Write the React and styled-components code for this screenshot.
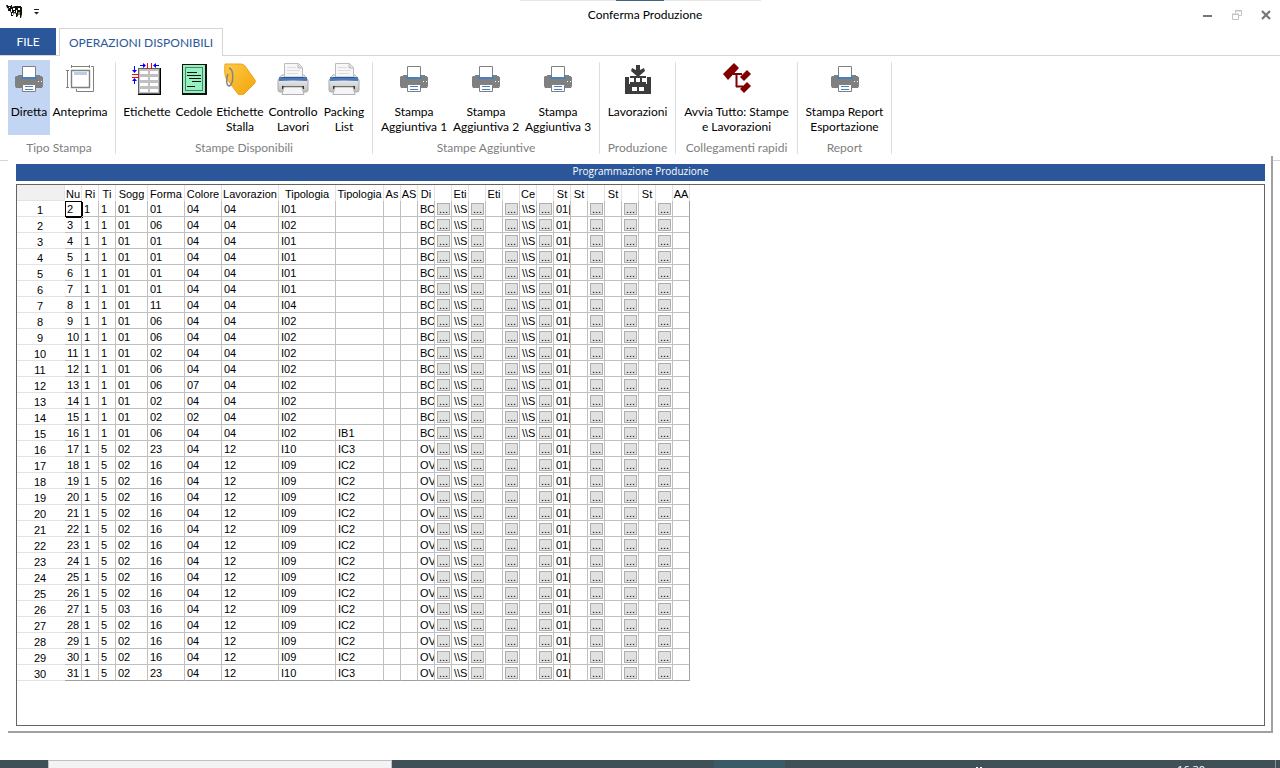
import { useState } from 'react';
import styled, { createGlobalStyle } from 'styled-components';

const GlobalStyle = createGlobalStyle`
  * {
    box-sizing: border-box;
  }

  body {
    margin: 0;
    background: #ffffff;
    font-family: Lato, 'Open Sans', sans-serif;
    font-size: 12px;
    color: #000000;
  }

  button, input {
    font-family: inherit;
    font-size: inherit;
    color: inherit;
    margin: 0;
    padding: 0;
    border: 0;
    background: none;
  }

  svg {
    display: block;
  }
`;

const Window = styled.div`
  min-height: 100vh;
  display: flex;
  flex-direction: column;
`;

const TopEdge = styled.div`
  height: 1px;
  display: flex;
  justify-content: center;
`;

const EdgePart = styled.span`
  width: ${props => props.$width}px;
  background: ${props => props.$color || '#e6e6e6'};
`;

const TitleBar = styled.header`
  height: 27px;
  display: flex;
  align-items: center;
`;

const QuickAccess = styled.div`
  width: 95px;
  padding: 0 0 6px 6px;
  display: flex;
  align-items: center;
  gap: 10px;
`;

const Title = styled.h1`
  flex: 1;
  margin: 0;
  font-size: 12px;
  line-height: 16px;
  font-weight: normal;
  text-align: center;
`;

const WindowButtons = styled.div`
  width: 85px;
  padding: 0 4px 0 2px;
  display: flex;
  justify-content: space-between;
`;

const WindowButton = styled.button`
  width: 20px;
  height: 20px;
  display: flex;
  align-items: center;
  justify-content: center;
`;

const Tabs = styled.nav`
  height: 28px;
  display: flex;
  border-bottom: 1px solid #d5d5d5;
`;

const FileTab = styled.button`
  width: 56px;
  height: 27px;
  background: #2b579a;
  color: #ffffff;
`;

const Tab = styled.button`
  width: 164px;
  height: 28px;
  margin-left: 3px;
  border: 1px solid #d5d5d5;
  border-bottom: 0;
  background: #ffffff;
  color: #2b579a;
`;

const Ribbon = styled.div`
  display: flex;
  height: 100px;
  padding: 4px 0 0 3px;
`;

const Group = styled.section`
  display: flex;
  flex-direction: column;
  padding: 0 5px;
`;

const GroupButtons = styled.div`
  display: flex;
`;

const GroupName = styled.div`
  margin-top: 5px;
  line-height: 16px;
  text-align: center;
  color: #808080;
  white-space: nowrap;
`;

const Separator = styled.div`
  width: 1px;
  height: 92px;
  margin-top: 2px;
  background: #dedede;
`;

const RibbonButton = styled.button`
  width: ${props => props.$width}px;
  height: 75px;
  padding-top: 3px;
  display: flex;
  flex-direction: column;
  align-items: center;
  gap: 9px;
  line-height: 15px;
  background: ${props => (props.$active ? '#c2d5f2' : 'transparent')};

  span {
    white-space: pre;
  }
`;

const Main = styled.main`
  flex: 1;
  display: flex;
  margin-bottom: 27px;
`;

const Edge = styled.div`
  width: ${props => props.$width}px;
  margin-top: 4px;
  border-top: 1px solid #d5d5d5;
`;

const Panel = styled.div`
  flex: 1;
  min-width: 0;
  display: flex;
  flex-direction: column;
  gap: 3px;
  padding: 8px 6px 5px 8px;
  border-right: 2px solid #a0a0a0;
  border-bottom: 2px solid #a0a0a0;
`;

const Caption = styled.h2`
  margin: 0;
  height: 17px;
  background: #2b579a;
  color: #ffffff;
  font-family: 'Open Sans', sans-serif;
  font-size: 10px;
  line-height: 14px;
  font-weight: normal;
  text-align: center;
`;

const GridBox = styled.div`
  flex: 1;
  border: 1px solid #646464;
`;

const Table = styled.table`
  width: 673px;
  table-layout: fixed;
  border-collapse: separate;
  border-spacing: 0;
  font-family: 'Liberation Sans', Arial, sans-serif;
  font-size: 11px;
  line-height: 13px;
  white-space: nowrap;
`;

const HeadCell = styled.th`
  height: 16px;
  padding: 3px 0 0;
  border-right: 1px solid #e3e3e3;
  font-weight: normal;
  text-align: center;
  overflow: hidden;
`;

const CornerCell = styled.td`
  padding: 0;
  background: #f0f0f0;
  border-right: 1px solid #e3e3e3;
  border-bottom: 1px solid #e3e3e3;
`;

const RowHead = styled.th`
  height: 16px;
  padding: 3px 2px 0 0;
  border-bottom: 1px solid #e3e3e3;
  font-weight: normal;
  line-height: 12px;
  text-align: center;
`;

const Cell = styled.td`
  height: 16px;
  padding: 2px 0 0 2px;
  border-right: 1px solid #c0c0c0;
  border-bottom: 1px solid #c0c0c0;
  overflow: hidden;
  vertical-align: top;
  box-shadow: ${props => (props.$selected ? 'inset 1px 1px #000000, 1px 1px #000000' : 'none')};
  border-color: ${props => (props.$selected ? '#000000' : '#c0c0c0')};

  tr:last-child > & {
    border-bottom-color: #a0a0a0;
  }

  &:last-child {
    border-right-color: #a0a0a0;
  }
`;

const DotsButton = styled.button`
  display: block;
  width: 13px;
  height: 12px;
  border: 1px solid #adadad;
  background: #e1e1e1;
  line-height: 8px;
  text-align: center;
`;

const Taskbar = styled.footer`
  height: 8px;
  display: flex;
  overflow: hidden;
  background: #405057;
  color: #ffffff;
`;

const SearchBox = styled.input`
  width: 344px;
  margin-left: 48px;
  border: 1px solid #c0c0c0;
  border-bottom: 0;
  border-radius: 0;
  appearance: none;
  background: #f2f3f4;
`;

const TaskButton = styled.button`
  width: 71px;
  margin-left: 322px;
  background: #3b5a67;
`;

const Tray = styled.div`
  flex: 1;
  display: flex;
  justify-content: flex-end;
  border-right: 1px solid #8a9498;
  margin-right: 4px;
  padding-right: 70px;
  gap: 194px;
`;

const TrayDots = styled.svg`
  margin-top: 7px;
`;

const Clock = styled.time`
  padding-top: 3px;
  font-family: 'Open Sans', sans-serif;
  font-size: 11px;
  line-height: 13px;
`;

const PrinterIcon = () => (
  <svg width="32" height="32" viewBox="0 0 32 32">
    <path d="M5 12h22v1h2v1h1v9l-1 2H3l-1-2v-9l1-1h2z" fill="#808080" />
    <path d="M9.5 3.5h13v11h-13z" fill="#fff" stroke="#808080" />
    <path d="M8 14h16v2H8z" fill="#4a80bd" />
    <path d="M9 12h1v2H9zM22 12h1v2h-1z" fill="#4a80bd" />
    <path d="M9.5 21.5h13v7h-13z" fill="#fff" stroke="#808080" />
    <path d="M12 23h8v1h-8zM12 26h8v1h-8z" fill="#4a80bd" />
    <path d="M25 18h1v1h-1zM28 18h1v1h-1z" fill="#fff" />
  </svg>
);

const PreviewIcon = () => (
  <svg width="32" height="32" viewBox="0 0 32 32" fill="none" stroke="#808080">
    <path d="M7.5 2v3M25.5 2v3M7.5 3.5h18M2 7.5h3M2 24.5h3M3.5 7.5v17" />
    <path d="M27 3.5h2.5v25h-17V26" />
    <path d="M7.5 7.5h18v17h-18z" strokeWidth="1.4" />
    <path d="M10 9h13v3H10z" fill="#b9cdea" stroke="none" />
  </svg>
);

const LabelsIcon = () => (
  <svg width="32" height="32" viewBox="0 0 32 32">
    <path d="M7 5h23v27H7z" fill="#000" />
    <path d="M7 5h22v26H7z" fill="#606060" />
    <path d="M8 6h20v24H8z" fill="#c0c0c0" />
    {[8, 14, 20, 26].map(y => (
      <path key={y} d={`M9 ${y}h8v3H9zM19 ${y}h8v3h-8z`} fill="#fff" />
    ))}
    <path d="M16 0h1v6h-1zM20 0h1v6h-1zM1 11h7v1H1zM1 14h7v1H1z" fill="#f00" />
    <path d="M9 2h3V0l3 2.5L12 5V3H9zM28 2h-3V0l-3 2.5L25 5V3h3zM3 3h1v4h2l-2.5 3L1 7h2zM3 21h1v-3h2l-2.5-3L1 18h2z" fill="#00f" />
  </svg>
);

const CouponIcon = () => (
  <svg width="32" height="32" viewBox="0 0 32 32">
    <path d="M4 1h25v31H4z" fill="#111" />
    <path d="M5 2h22v28H5z" fill="#93f2bf" />
    <path d="M7.5 4.5h17v23h-17z" fill="none" stroke="#111" strokeDasharray="1 1" />
    <path d="M9 9.5h10M9 12.5h14M11 15.5h12M14 18.5h9M9 23.5h8" stroke="#111" />
  </svg>
);

const TagIcon = () => (
  <svg width="32" height="32" viewBox="0 0 32 32">
    <defs>
      <linearGradient id="tag" x1="0" y1="0" x2="1" y2="1">
        <stop offset="0" stopColor="#fccb45" />
        <stop offset="1" stopColor="#f5a30a" />
      </linearGradient>
    </defs>
    <path d="M1 1h16q2 0 4 2l10 14q1 2-1 4L20 31q-3 2-6 0L2 15Q0 11 1 1z" fill="url(#tag)" stroke="#eba51c" />
    <path d="M5 5c5 1 5 16 0 18-3-1-3-8-1-12" fill="none" stroke="#858585" strokeWidth="1.5" />
  </svg>
);

const LaserIcon = () => (
  <svg width="32" height="32" viewBox="0 0 32 32">
    <defs>
      <linearGradient id="laser" x1="0" y1="0" x2="0" y2="1">
        <stop offset="0" stopColor="#fafafa" />
        <stop offset="1" stopColor="#bdbdbd" />
      </linearGradient>
    </defs>
    <path d="M5 12h22l4 5v10q0 2-2 2H3q-2 0-2-2V17z" fill="url(#laser)" stroke="#aaa" />
    <path d="M7.5 14V.5h14l4 4V14z" fill="#f7f7f7" stroke="#bcbcbc" />
    <path d="M21 1v4h4" fill="#ddd" stroke="#bbb" />
    <path d="M10 4.500h9M10 7.500h13M10 10.500h11" stroke="#dcdcdc" />
    <path d="M2 14h28v4q-14-1-28 0z" fill="#4b78b8" />
    <path d="M5 14h22v1H5z" fill="#29549a" />
    <path d="M5 23h22v3H5z" fill="#333" />
    <path d="M7 24h18l2 7.5H5z" fill="#f5f5f5" stroke="#b0b0b0" />
  </svg>
);

const FactoryIcon = () => (
  <svg width="32" height="32" viewBox="0 0 32 32">
    <path d="M3 14h4v7h18v-7h4v17H3z" fill="#3c3c3c" />
    <path d="M8 13h16v9H8z" fill="#3c3c3c" />
    <path d="M8 15h4v4H8zM14 15h4v4h-4zM20 15h4v4h-4zM10 24h5v4h-5zM17 24h5v4h-5z" fill="#fff" />
    <path d="M7 12h18v1H7z" fill="#fff" />
    <path d="M14 2h4v5l4-2 1 3-7 6-7-6 1-3 4 2z" fill="#3c3c3c" />
  </svg>
);

const LinksIcon = () => (
  <svg width="32" height="32" viewBox="0 0 32 32">
    <path d="M12 11h9M15.5 11v13M15 23.500h7" fill="none" stroke="#800000" strokeWidth="2" />
    <g fill="#800000">
      <path d="M2 11L13 0l5 5L7 17z" />
      <path d="M19 14l7-7 4 4-7 7z" />
      <path d="M19 26l7-7 4 4-7 7z" />
    </g>
  </svg>
);

const CowIcon = () => (
  <svg width="17" height="15" viewBox="0 0 17 15">
    <path d="M0 1h2v1h3V1h1v2l3-1h6v1h1v7l-1 4h-1v-4h-1l-2 3h-1V9l-1 1-1-2-1 4H5V9L4 7H2V5h1L1 4z" fill="#111" />
    <path d="M7 4h2v2H7zM5 5h1v3H5zM10 6h1v3h-1zM12 4h2v2h-2zM8 7h1v1H8zM3 3h1v1H3zM6 9h1v2H6z" fill="#fff" />
    <path d="M12 8h2v3h-2z" fill="#8a8a4a" />
  </svg>
);

const groups = [
  {
    name: 'Tipo Stampa',
    items: [
      { label: 'Diretta', width: 42, icon: PrinterIcon },
      { label: 'Anteprima', width: 60, icon: PreviewIcon },
    ],
  },
  {
    name: 'Stampe Disponibili',
    items: [
      { label: 'Etichette', width: 52, icon: LabelsIcon },
      { label: 'Cedole', width: 42, icon: CouponIcon },
      { label: 'Etichette\nStalla', width: 50, icon: TagIcon },
      { label: 'Controllo\nLavori', width: 56, icon: LaserIcon },
      { label: 'Packing\nList', width: 46, icon: LaserIcon },
    ],
  },
  {
    name: 'Stampe Aggiuntive',
    items: [
      { label: 'Stampa\nAggiuntiva 1', width: 72, icon: PrinterIcon },
      { label: 'Stampa\nAggiuntiva 2', width: 72, icon: PrinterIcon },
      { label: 'Stampa\nAggiuntiva 3', width: 72, icon: PrinterIcon },
    ],
  },
  { name: 'Produzione', items: [{ label: 'Lavorazioni', width: 65, icon: FactoryIcon }] },
  { name: 'Collegamenti rapidi', items: [{ label: 'Avvia Tutto: Stampe\ne Lavorazioni', width: 111, icon: LinksIcon }] },
  { name: 'Report', items: [{ label: 'Stampa Report\nEsportazione', width: 83, icon: PrinterIcon }] },
];

const DOTS = '...';

const columns = [
  ['Nu', 17], ['Ri', 17], ['Ti', 17], ['Sogg', 32], ['Forma', 37], ['Colore', 37],
  ['Lavorazion', 57], ['Tipologia', 57], ['Tipologia', 48], ['As', 17], ['AS', 17],
  ['Di', 17], ['', 17], ['Eti', 17], ['', 17], ['Eti', 17], ['', 17], ['Ce', 17], ['', 17],
  ['St', 17], ['St', 17], ['', 17], ['St', 17], ['', 17], ['St', 17], ['', 17], ['AA', 17],
];

// Ti, Sogg, Forma, Colore, Lavorazione, Tipologia, Tipologia 2
const production = [
  '1 01 01 04 04 I01', '1 01 06 04 04 I02', '1 01 01 04 04 I01', '1 01 01 04 04 I01',
  '1 01 01 04 04 I01', '1 01 01 04 04 I01', '1 01 11 04 04 I04', '1 01 06 04 04 I02',
  '1 01 06 04 04 I02', '1 01 02 04 04 I02', '1 01 06 04 04 I02', '1 01 06 07 04 I02',
  '1 01 02 04 04 I02', '1 01 02 02 04 I02', '1 01 06 04 04 I02 IB1', '5 02 23 04 12 I10 IC3',
  ...Array(9).fill('5 02 16 04 12 I09 IC2'),
  '5 03 16 04 12 I09 IC2',
  ...Array(3).fill('5 02 16 04 12 I09 IC2'),
  '5 02 23 04 12 I10 IC3',
];

const rows = production.map((line, index) => {
  const values = line.split(' ');
  const bovine = values[0] === '1';
  return [
    String(index + 2), '1', ...values.slice(0, 6), values[6] || '', '', '',
    bovine ? 'BO' : 'OV', DOTS, '\\\\S', DOTS, '', DOTS, bovine ? '\\\\S' : '', DOTS,
    '01|', '', DOTS, '', DOTS, '', DOTS, '',
  ];
});

const App = () => {
  const [mode, setMode] = useState('Diretta');

  return (
    <Window>
      <GlobalStyle />
      <TopEdge>
        <EdgePart $width={96} />
        <EdgePart $width={48} $color="#40667d" />
        <EdgePart $width={97} />
      </TopEdge>
      <TitleBar>
        <QuickAccess>
          <CowIcon />
          <button aria-label="Personalizza barra">
            <svg width="7" height="7" viewBox="0 0 7 7">
              <path d="M1 1h5v1H1zM1 4h5L3.5 6.5z" fill="#222" />
            </svg>
          </button>
        </QuickAccess>
        <Title>Conferma Produzione</Title>
        <WindowButtons>
          <WindowButton aria-label="Riduci a icona">
            <svg width="10" height="10" viewBox="0 0 10 10"><path d="M1 5h9v2H1z" fill="#777" /></svg>
          </WindowButton>
          <WindowButton aria-label="Ripristina">
            <svg width="10" height="10" viewBox="0 0 10 10" fill="none" stroke="#c3c3c3">
              <path d="M3.5 3V.5h6v5H7M3 1h7" />
              <path d="M.5 4.5h6v5h-6zM0 4h7" />
            </svg>
          </WindowButton>
          <WindowButton aria-label="Chiudi">
            <svg width="10" height="10" viewBox="0 0 10 10"><path d="M1 1l8 8M9 1L1 9" stroke="#777" strokeWidth="2.2" /></svg>
          </WindowButton>
        </WindowButtons>
      </TitleBar>

      <Tabs>
        <FileTab>FILE</FileTab>
        <Tab>OPERAZIONI DISPONIBILI</Tab>
      </Tabs>

      <Ribbon>
        {groups.map(group => [
          <Group key={group.name}>
            <GroupButtons>
              {group.items.map(({ label, width, icon: Icon }) => (
                <RibbonButton
                  key={label}
                  $width={width}
                  $active={label === mode}
                  onClick={() => setMode(label)}
                >
                  <Icon />
                  <span>{label}</span>
                </RibbonButton>
              ))}
            </GroupButtons>
            <GroupName>{group.name}</GroupName>
          </Group>,
          <Separator key={`${group.name}-end`} />,
        ])}
      </Ribbon>

      <Main>
        <Edge $width={8} />
        <Panel>
          <Caption>Programmazione Produzione</Caption>
          <GridBox>
            <Table>
              <colgroup>
                <col width="48" />
                {columns.map(([, width], index) => <col key={index} width={width} />)}
              </colgroup>
              <thead>
                <tr>
                  <CornerCell />
                  {columns.map(([name], index) => <HeadCell key={index} scope="col">{name}</HeadCell>)}
                </tr>
              </thead>
              <tbody>
                {rows.map((row, rowIndex) => (
                  <tr key={rowIndex}>
                    <RowHead scope="row">{rowIndex + 1}</RowHead>
                    {row.map((value, index) => (
                      <Cell key={index} $selected={rowIndex === 0 && index === 0}>
                        {value === DOTS ? <DotsButton>{value}</DotsButton> : value}
                      </Cell>
                    ))}
                  </tr>
                ))}
              </tbody>
            </Table>
          </GridBox>
        </Panel>
        <Edge $width={7} />
      </Main>

      <Taskbar>
        <SearchBox type="search" aria-label="Cerca" />
        <TaskButton aria-label="Conferma Produzione" />
        <Tray>
          <TrayDots width="8" height="2" viewBox="0 0 8 2">
            <path d="M1 0h2v2H1zM5 0h2v2H5z" fill="#fff" />
          </TrayDots>
          <Clock>16:30</Clock>
        </Tray>
      </Taskbar>
    </Window>
  );
};

export default App;
